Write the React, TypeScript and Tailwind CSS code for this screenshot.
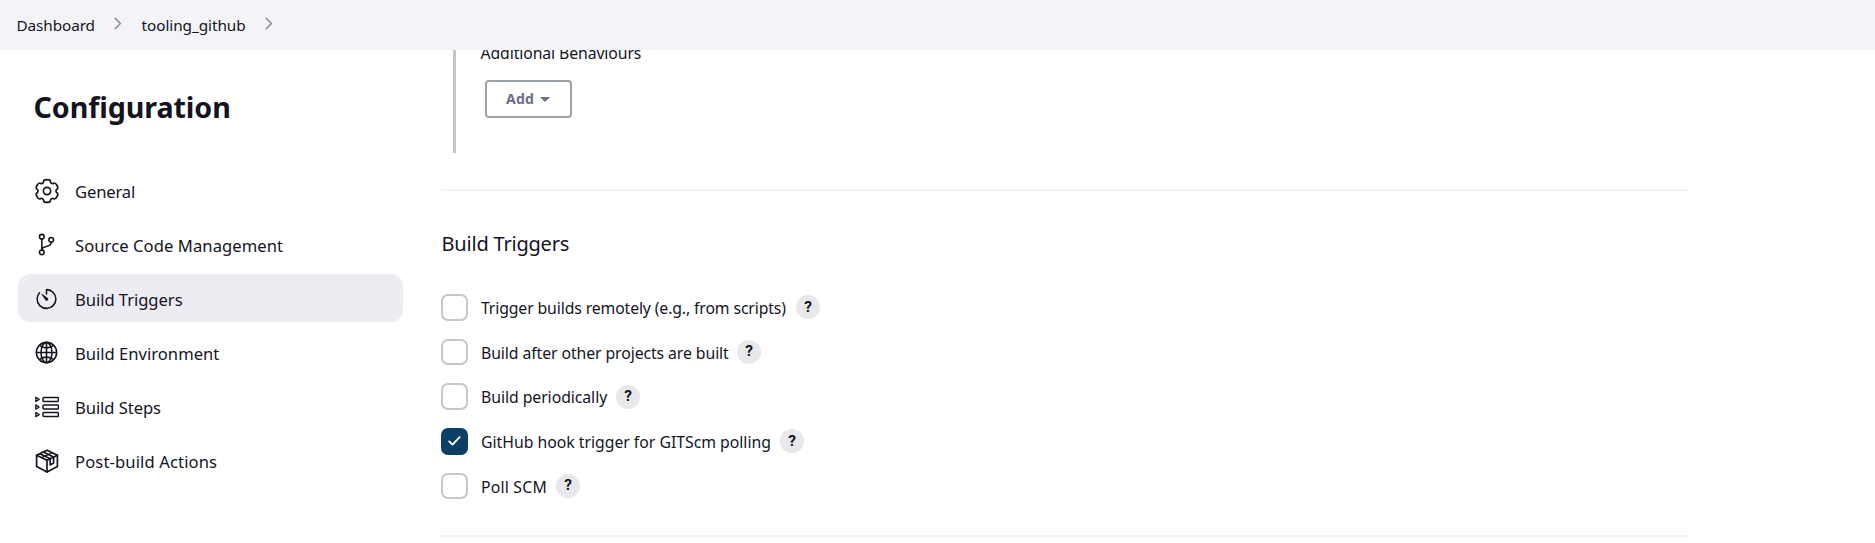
import type { ReactNode } from "react";
import { IoGitBranchOutline, IoTimerOutline, IoGlobeOutline } from "react-icons/io5";

function Chevron() {
  return (
    <svg className="h-[13px] w-[8px]" viewBox="0 0 8 13" fill="none" stroke="#85858d" strokeWidth="1.4" strokeLinecap="round" strokeLinejoin="round">
      <path d="M1.2 1.2 6.4 6.5 1.2 11.8" />
    </svg>
  );
}

// Six rounded teeth: each one has two outer and two inner control points.
const gearPoints = [0, 60, 120, 180, 240, 300].flatMap((a) =>
  [[-22, 9], [-16, 11.9], [16, 11.9], [22, 9]].map(([d, r]) => {
    const t = ((a + d - 90) * Math.PI) / 180;
    return [12 + r * Math.cos(t), 12 + r * Math.sin(t)];
  }),
);
const mid = (p: number[], q: number[]) => `${((p[0] + q[0]) / 2).toFixed(2)} ${((p[1] + q[1]) / 2).toFixed(2)}`;
const gearPath =
  `M${mid(gearPoints[gearPoints.length - 1], gearPoints[0])}` +
  gearPoints.map((p, i) => `Q${p[0].toFixed(2)} ${p[1].toFixed(2)} ${mid(p, gearPoints[(i + 1) % gearPoints.length])}`).join("") +
  "z";

function GearIcon() {
  return (
    <svg className="size-6" viewBox="0 0 24 24" fill="none" stroke="currentColor" strokeWidth="1.65" overflow="visible">
      <path d={gearPath} />
      <circle cx="12" cy="12" r="3.6" />
    </svg>
  );
}

function StepsIcon() {
  return (
    <svg className="size-6" viewBox="0 0 24 24" fill="none" stroke="currentColor" strokeWidth="1.5" strokeLinejoin="round">
      {[4.4, 12, 19.6].map((y) => (
        <g key={y}>
          <path d={`M.8 ${y - 2.1}v4.2L4.2 ${y}z`} strokeWidth="1.3" />
          <rect x="8" y={y - 2} width="15.4" height="4" rx="1" />
        </g>
      ))}
    </svg>
  );
}

function PackageIcon() {
  return (
    <svg className="size-6" viewBox="0 0 24 24" fill="none" stroke="currentColor" strokeWidth="1.7" strokeLinejoin="round" strokeLinecap="round">
      <path d="M12 1.2 22.4 6.2v11.4L12 23 1.6 17.6V6.2z" />
      <path d="M1.6 6.2 12 11.2l10.4-5M12 11.2V23" />
      <path d="M4.8 4.7 15.2 9.7v6.2l3.4-1.8V8L8.2 3" />
      <path d="M6.8 8.6 17.2 3.7" strokeWidth="1.2" />
    </svg>
  );
}

type NavEntry = { label: string; icon: ReactNode; tracking: string; active?: boolean };

const nav: NavEntry[] = [
  { label: "General", icon: <GearIcon />, tracking: "tracking-[-0.15px]" },
  { label: "Source Code Management", icon: <IoGitBranchOutline className="size-[25px]" />, tracking: "tracking-[0.07px]" },
  { label: "Build Triggers", icon: <IoTimerOutline className="size-[26px]" />, tracking: "tracking-[-0.05px]", active: true },
  { label: "Build Environment", icon: <IoGlobeOutline className="size-[27px]" />, tracking: "tracking-[0px]" },
  { label: "Build Steps", icon: <StepsIcon />, tracking: "tracking-[-0.07px]" },
  { label: "Post-build Actions", icon: <PackageIcon />, tracking: "tracking-[0.12px]" },
];

const triggers = [
  { label: "Trigger builds remotely (e.g., from scripts)", width: "w-[315px]", tracking: "tracking-[-0.13px]", checked: false },
  { label: "Build after other projects are built", width: "w-[256px]", tracking: "tracking-[-0.09px]", checked: false },
  { label: "Build periodically", width: "w-[135px]", tracking: "tracking-[-0.06px]", checked: false },
  { label: "GitHub hook trigger for GITScm polling", width: "w-[299px]", tracking: "tracking-[-0.02px]", checked: true },
  { label: "Poll SCM", width: "w-[75px]", tracking: "tracking-[0.2px]", checked: false },
];

export default function App() {
  return (
    <div className="h-[543px] overflow-hidden bg-white font-['Noto_Sans','Open_Sans',sans-serif] text-[#14141f]">
      <header className="flex h-[50px] items-center bg-[#f4f3f8] pb-px pl-[16.5px] text-[15.3px] leading-6">
        <span className="w-[97.5px] tracking-[-0.09px]">Dashboard</span>
        <span className="mb-[2px] w-[27.5px]"><Chevron /></span>
        <span className="w-[123px] tracking-[-0.05px]">tooling_github</span>
        <span className="mb-[2px]"><Chevron /></span>
      </header>

      <div className="flex h-[493px] overflow-hidden">
        <aside className="w-[441px] shrink-0 pl-[18px]">
          <h1 className="mt-[37px] pl-[15.5px] text-[28.7px] font-bold leading-10 tracking-[-0.1px]">Configuration</h1>
          <nav className="mt-[39px] flex w-[385px] flex-col gap-1.5">
            {nav.map((n) => (
              <a key={n.label} className={`flex h-12 items-center rounded-xl pl-[16px] ${n.active ? "bg-[#edecf2]" : ""}`}>
                <span className="flex w-[25px] items-center justify-center pt-px">{n.icon}</span>
                <span className={`ml-4 pt-[3px] text-[16.6px] leading-6 ${n.tracking}`}>{n.label}</span>
              </a>
            ))}
          </nav>
        </aside>

        <main className="w-[1247px] shrink-0 text-[15.8px]">
          <div className="ml-3 flow-root h-[103px] border-l-[3px] border-[#c3c8cd] pl-[24.5px]">
            <div className="-mt-[9px] leading-6 tracking-[-0.11px]">Additional Behaviours</div>
            <button className="ml-[4.5px] mt-[15px] flex h-[38px] w-[87px] items-center rounded-[4px] border-2 border-[#9ca3a8] pl-[19px] text-[14px] font-bold leading-5 tracking-[0.2px] text-[#6f6a88]">
              Add
              <svg className="ml-[6px] h-[5px] w-[10px]" viewBox="0 0 10 5" fill="currentColor"><path d="M0 0h10L5 5z" /></svg>
            </button>
          </div>
          <div className="mt-9 h-0.5 bg-[#f3f3f5]" />
          <h2 className="mt-[37px] pl-[0.5px] text-[20px] leading-8 tracking-[-0.2px]">Build Triggers</h2>
          <div className="mt-[25px]">
            {triggers.map((t) => (
              <div key={t.label} className="flex h-[44.7px] items-center">
                <span className={`flex h-[26.5px] w-[27px] shrink-0 items-center justify-center rounded-[7px] ${t.checked ? "bg-[#0b3f63]" : "border-2 border-[#c3c8cd]"}`}>
                  {t.checked && (
                    <svg className="h-[10px] w-[13px]" viewBox="0 0 13 10" fill="none" stroke="white" strokeWidth="1.9" strokeLinecap="round" strokeLinejoin="round">
                      <path d="M1.2 5.4 4.5 8.6 11.6 1.2" />
                    </svg>
                  )}
                </span>
                <span className={`ml-[13px] shrink-0 whitespace-nowrap pt-px leading-6 ${t.width} ${t.tracking}`}>{t.label}</span>
                <span className="flex size-6 items-center justify-center rounded-full bg-[#e8e8ea] font-['Roboto',sans-serif] text-[15.5px] font-bold leading-none">?</span>
              </div>
            ))}
          </div>
          <div className="mt-[26.5px] h-0.5 bg-[#f3f3f5]" />
        </main>
      </div>
    </div>
  );
}
